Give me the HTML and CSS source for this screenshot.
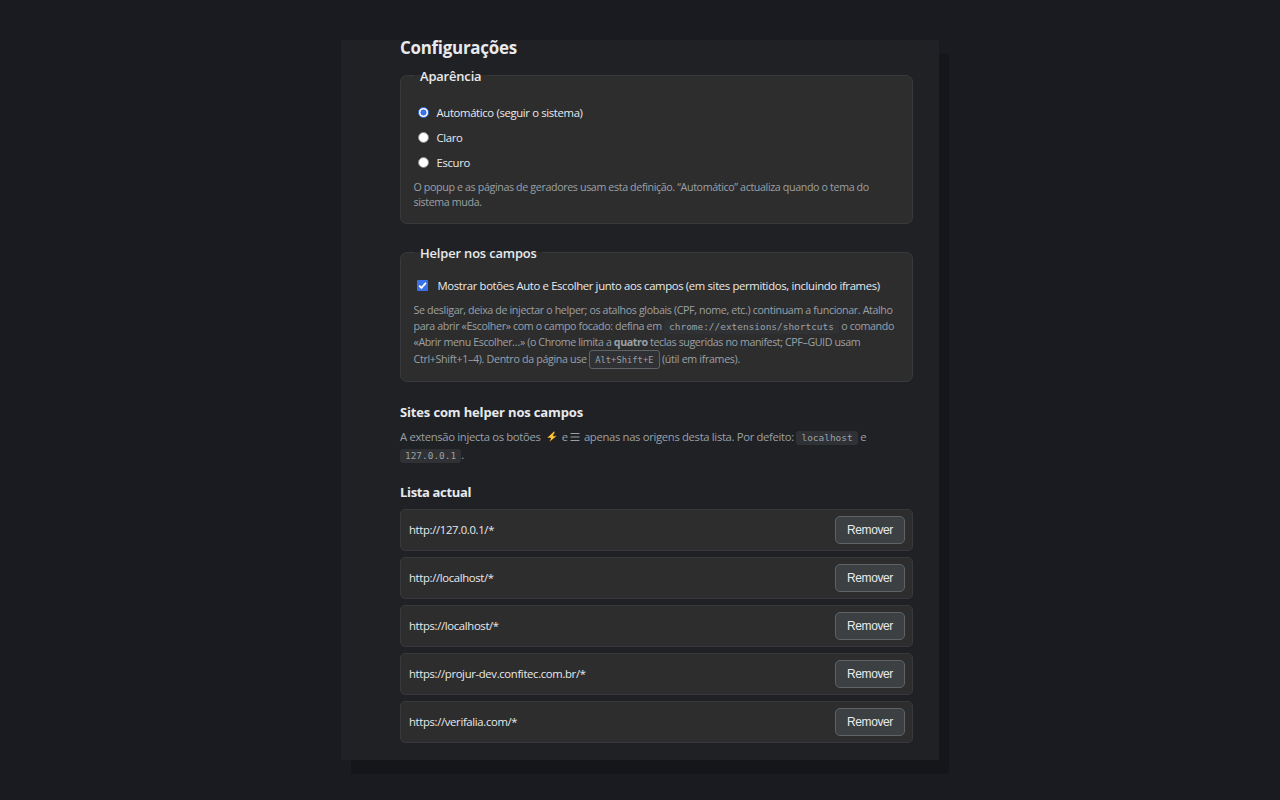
FILE: index.html
```html
<!DOCTYPE html>
<html lang="pt">
<head>
<meta charset="utf-8">
<title>Configurações</title>
<link rel="stylesheet" href="styles.css">
</head>
<body>
<main class="panel">
  <h1 class="title"><span>Configurações</span></h1>
  <fieldset class="card card-theme">
    <legend class="legend">Aparência</legend>
    <label class="option"><span class="radio checked"></span><span>Automático (seguir o sistema)</span></label>
    <label class="option"><span class="radio"></span><span>Claro</span></label>
    <label class="option"><span class="radio"></span><span>Escuro</span></label>
    <p class="hint hint-theme"><span class="line a1">O popup e as páginas de geradores usam esta definição. “Automático” actualiza quando o tema do</span> <span class="line">sistema muda.</span></p>
  </fieldset>
  <fieldset class="card card-helper">
    <legend class="legend">Helper nos campos</legend>
    <label class="check-row"><svg class="check" viewBox="0 0 11 11"><rect width="11" height="11" rx="1" fill="#3b71e8"/><path d="M2.2 5.7 4.4 7.9 8.9 2.9" fill="none" stroke="#fff" stroke-width="1.8"/></svg><span>Mostrar botões Auto e Escolher junto aos campos (em sites permitidos, incluindo iframes)</span></label>
    <p class="hint hint-helper"><span class="line">Se desligar, deixa de injectar o helper; os atalhos globais (CPF, nome, etc.) continuam a funcionar. Atalho</span> <span class="line b2">para abrir «Escolher» com o campo focado: defina em <code class="code">chrome://extensions/shortcuts</code> o comando</span> <span class="line b3">«Abrir menu Escolher…» (o Chrome limita a <strong>quatro</strong> teclas sugeridas no manifest; CPF–GUID usam</span> <span class="line b4">Ctrl+Shift+1–4). Dentro da página use <kbd class="kbd">Alt+Shift+E</kbd> (útil em iframes).</span></p>
  </fieldset>
  <h2 class="heading h-sites"><span>Sites com helper nos campos</span></h2>
  <p class="intro"><span class="line">A extensão injecta os botões <svg class="bolt" viewBox="0 0 12 12"><path d="M7.6.6.7 7.1h4L3 11.4l8.3-6.6H7.2L9.4.6z" fill="#fcc436" stroke="#17140c" stroke-width=".6"/></svg> e <svg class="menu" viewBox="0 0 10 10"><path d="M.5 1.5h9M.5 5h9M.5 8.5h9" stroke="#9aa0a6" stroke-width="1"/></svg> apenas nas origens desta lista. Por defeito: <code class="code">localhost</code> e</span> <span class="line"><code class="code">127.0.0.1</code>.</span></p>
  <h2 class="heading h-list"><span>Lista actual</span></h2>
  <ul class="list">
    <li class="item"><span>http://127.0.0.1/*</span><button class="remove">Remover</button></li>
    <li class="item"><span>http://localhost/*</span><button class="remove">Remover</button></li>
    <li class="item"><span>https://localhost/*</span><button class="remove">Remover</button></li>
    <li class="item"><span>https://projur-dev.confitec.com.br/*</span><button class="remove">Remover</button></li>
    <li class="item"><span>https://verifalia.com/*</span><button class="remove">Remover</button></li>
  </ul>
</main>
</body>
</html>
```
FILE: styles.css
```css
* { box-sizing: border-box; }
body {
  margin: 0;
  padding: 40px 0 0 341px;
  height: 800px;
  overflow: hidden;
  background: #1a1b20;
  color: #e8eaed;
  font: 11.3px/16px "Open Sans", "Noto Sans", sans-serif;
  letter-spacing: -0.34px;
}
.panel {
  width: 598px;
  height: 720px;
  padding: 0 26px 0 59px;
  background: #202124;
  box-shadow: 10px 14px 0 #151619;
  white-space: nowrap;
}
.title { margin: 0; height: 25px; font-size: 16.9px; line-height: 16px; font-weight: 700; letter-spacing: -0.25px; }
.card {
  margin: 0;
  min-width: 0;
  padding: 0 12.5px;
  border: 1px solid #38393c;
  border-radius: 7px;
  background: #2d2d2e;
}
.legend { height: 20px; margin: 0 0 0 0.5px; padding: 1px 6px 0; font-size: 12.9px; line-height: 20px; font-weight: 600; letter-spacing: -0.14px; }
.card-theme { height: 159px; }
.card-helper { height: 140px; margin-top: 18px; }
.option { display: flex; align-items: center; height: 25px; gap: 8px; padding-left: 4px; }
.legend + .option { margin-top: 15px; }
.radio { width: 11px; height: 11px; border-radius: 50%; background: #fff; border: 1px solid #858585; }
.radio.checked { border: 1px solid #3b71e8; background: radial-gradient(circle, #3b71e8 2.8px, #fff 3.3px); }
.check-row { display: flex; align-items: center; height: 20px; gap: 10px; margin-top: 14px; padding-left: 3px; }
.check { width: 11px; height: 11px; flex: none; margin-bottom: 2px; }
.hint, .intro { margin: 0; color: #9aa0a6; }
.hint { font-size: 10.7px; letter-spacing: -0.37px; }
.line { display: block; height: 16px; line-height: 16px; }
.hint-theme { margin-top: 4px; }
.a1 { height: 15px; }
.b2 { letter-spacing: -0.38px; }
.b3 { letter-spacing: -0.41px; }
.b4 { letter-spacing: -0.33px; }
.hint-helper { margin-top: 6px; }
.code, .kbd { font-family: "DejaVu Sans Mono", monospace; font-size: 9.45px; letter-spacing: 0; }
.code { display: inline-block; height: 14px; padding: 0 5px; border-radius: 3px; background: #303134; line-height: 14px; }
.kbd { display: inline-block; height: 19px; padding: 0 5px; border: 1px solid #5f6368; border-radius: 3px; background: #303134; font-size: 8.8px; line-height: 18px; }
.heading { margin: 0; font-size: 13px; line-height: 20px; font-weight: 700; letter-spacing: -0.15px; }
.h-sites { margin-top: 20px; }
.intro { margin-top: 7px; }
.intro .line { height: 18px; }
.bolt { width: 12px; height: 12px; margin: 0 1.5px 0 2.5px; vertical-align: -2px; }
.menu { width: 10px; height: 10px; margin-right: 1px; vertical-align: -1px; }
.h-list { margin-top: 17px; letter-spacing: -0.34px; }
.list { margin: 7px 0 0; padding: 0; list-style: none; display: grid; gap: 6.1px; }
.item { display: flex; align-items: center; justify-content: space-between; height: 42px; padding: 0 7px 0 8px; border: 1px solid #38393c; border-radius: 5px; background: #2d2d2e; }
.remove { width: 70px; height: 28px; padding: 0; border: 1px solid #5f6368; border-radius: 5px; background: #3c4043; color: #e8eaed; font: 12px/26px "Liberation Sans", Arial, sans-serif; letter-spacing: -0.4px; }
```
